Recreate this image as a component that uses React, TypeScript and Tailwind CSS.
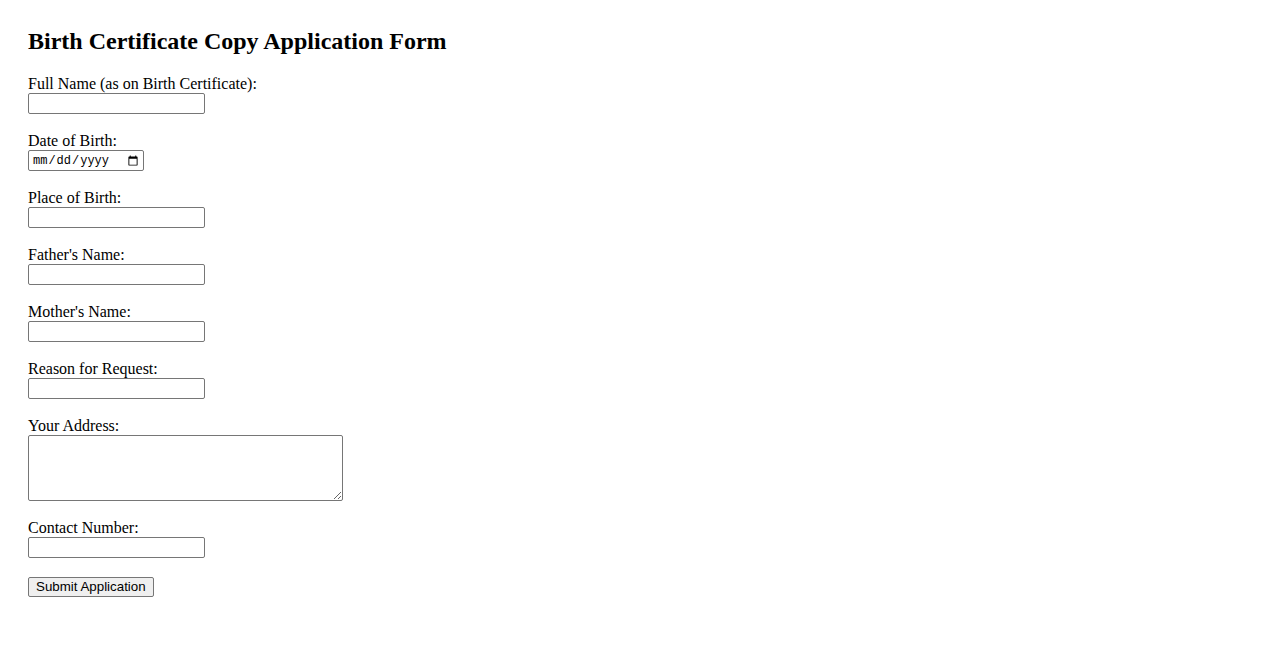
const fields = [
  { label: "Full Name (as on Birth Certificate):", type: "text" },
  { label: "Date of Birth:", type: "date" },
  { label: "Place of Birth:", type: "text" },
  { label: "Father's Name:", type: "text" },
  { label: "Mother's Name:", type: "text" },
  { label: "Reason for Request:", type: "text" },
  { label: "Your Address:", type: "textarea" },
  { label: "Contact Number:", type: "tel" },
];

const boxClass =
  "block border border-[#767676] rounded-[2px] bg-white text-black outline-none";

export default function App() {
  return (
    <div className="min-h-screen bg-white px-7 pt-7 text-black font-['Liberation_Serif',serif]">
      <h2 className="text-[24px] font-bold leading-[26px] mb-[22px]">Birth Certificate Copy Application Form</h2>

      <form onSubmit={(e) => e.preventDefault()}>
        {fields.map((field) => (
          <div key={field.label} className="mb-[19px]">
            <label className="block text-[16px] leading-[15px] h-[17px]">{field.label}</label>
            {field.type === "textarea" ? (
              <textarea
                className={`${boxClass} w-[315px] h-[66px] resize text-[13px] px-[2px] font-['Liberation_Mono',monospace]`}
              />
            ) : field.type === "date" ? (
              <input
                type="date"
                className={`${boxClass} w-[116px] h-[21px] pl-[3px] pr-[2px] text-[12px] font-['Liberation_Mono',monospace]`}
              />
            ) : (
              <input
                type={field.type}
                className={`${boxClass} w-[177px] h-[21px] px-[2px] text-[13.33px] font-['Liberation_Sans',Arial,sans-serif]`}
              />
            )}
          </div>
        ))}

        <button
          type="submit"
          className="block h-[20px] px-[7px] border border-[#767676] rounded-[2px] bg-[#efefef] text-[13.33px] leading-[16px] text-black font-['Liberation_Sans',Arial,sans-serif]"
        >
          Submit Application
        </button>
      </form>
    </div>
  );
}
